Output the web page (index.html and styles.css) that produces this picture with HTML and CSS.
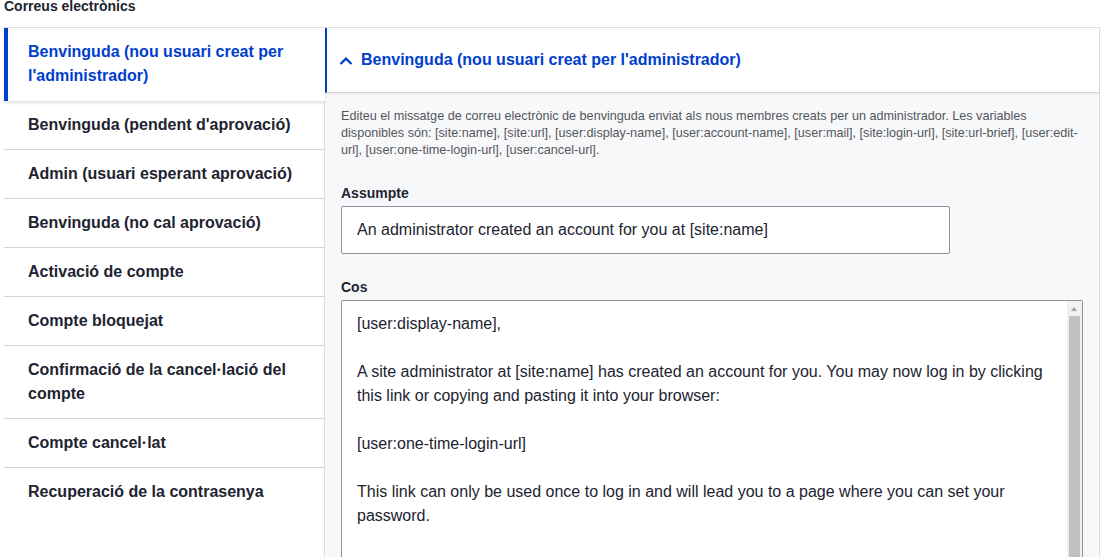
FILE: index.html
```html
<!DOCTYPE html>
<html lang="ca">
<head>
<meta charset="utf-8">
<title>Correus electrònics</title>
<link rel="stylesheet" href="styles.css">
</head>
<body>
<div class="page">
  <h2 class="title">Correus electrònics</h2>
  <div class="vtabs">
    <ul class="menu">
      <li class="tab is-active"><a>Benvinguda (nou usuari creat per l'administrador)</a></li>
      <li class="tab"><a>Benvinguda (pendent d'aprovació)</a></li>
      <li class="tab"><a>Admin (usuari esperant aprovació)</a></li>
      <li class="tab"><a>Benvinguda (no cal aprovació)</a></li>
      <li class="tab"><a>Activació de compte</a></li>
      <li class="tab"><a>Compte bloquejat</a></li>
      <li class="tab"><a>Confirmació de la cancel·lació del compte</a></li>
      <li class="tab"><a>Compte cancel·lat</a></li>
      <li class="tab"><a>Recuperació de la contrasenya</a></li>
    </ul>
    <div class="pane">
      <div class="summary">
        <svg class="chev" width="14" height="10" viewBox="0 0 14 10"><path d="M1.5 8 L7 2.6 L12.5 8" fill="none" stroke="#003ecc" stroke-width="2.2"/></svg>
        <span>Benvinguda (nou usuari creat per l'administrador)</span>
      </div>
      <div class="content">
        <p class="desc">Editeu el missatge de correu electrònic de benvinguda enviat als nous membres creats per un administrador. Les variables disponibles són: [site:name], [site:url], [user:display-name], [user:account-name], [user:mail], [site:login-url], [site:url-brief], [user:edit-url], [user:one-time-login-url], [user:cancel-url].</p>
        <div class="field">
          <label class="label">Assumpte</label>
          <input class="input" type="text" value="An administrator created an account for you at [site:name]">
        </div>
        <div class="field">
          <label class="label">Cos</label>
          <div class="ta-wrap">
            <textarea class="textarea" rows="15">[user:display-name],

A site administrator at [site:name] has created an account for you. You may now log in by clicking this link or copying and pasting it into your browser:

[user:one-time-login-url]

This link can only be used once to log in and will lead you to a page where you can set your password.

After setting your password, you will be able to log in at [site:login-url] in the future using:

username: [user:name]
password: Your password

--  [site:name] team</textarea>
            <div class="sb" aria-hidden="true">
              <div class="sb-up"></div>
              <div class="sb-thumb"></div>
            </div>
          </div>
        </div>
      </div>
    </div>
  </div>
</div>
</body>
</html>
```
FILE: styles.css
```css
html, body {
  margin: 0;
  padding: 0;
  background: #ffffff;
  font-family: "Liberation Sans", Arial, sans-serif;
  color: #222330;
  overflow: hidden;
}
.page {
  padding: 0 4px;
}
.title {
  margin: -3px 0 12px;
  font-size: 14px;
  line-height: 18px;
  font-weight: 700;
  color: #222330;
}
.vtabs {
  display: flex;
  align-items: stretch;
  border-top: 1px solid #dedfe4;
}
.menu {
  list-style: none;
  margin: 0;
  padding: 0;
  width: 320px;
  flex: 0 0 320px;
}
.tab {
  border-bottom: 1px solid #d4d4d8;
  padding: 12px 20px 12px 24px;
  font-size: 16px;
  line-height: 24px;
  font-weight: 700;
  color: #222330;
}
.tab:last-child {
  border-bottom: 0;
}
.tab.is-active {
  position: relative;
  z-index: 1;
  border-left: 4px solid #003ecc;
  padding-left: 20px;
  padding-bottom: 13px;
  border-bottom: 0;
  color: #003ecc;
  background: #fff;
  box-shadow: 0 2px 3px rgba(0, 0, 0, 0.12);
  margin-right: -1px;
}
.pane {
  flex: 1;
  background: #f7f8fa;
  border-left: 1px solid #dedfe4;
  border-right: 1px solid #dedfe4;
  min-height: 540px;
}
.summary {
  display: flex;
  align-items: center;
  gap: 8px;
  height: 64px;
  padding-left: 12px;
  background: #fff;
  border-left: 2px solid #003ecc;
  border-bottom: 1px solid #d4d4d8;
  box-shadow: 0 1px 2px rgba(0, 0, 0, 0.08);
  color: #003ecc;
  font-size: 16px;
  font-weight: 700;
  line-height: 24px;
}
.chev {
  display: block;
  margin-top: 1px;
}
.content {
  padding: 15px 16px 0 16px;
}
.desc {
  margin: 0 0 25px;
  font-size: 12.64px;
  line-height: 17px;
  color: #55565b;
}
.field {
  margin-bottom: 24px;
}
.label {
  display: block;
  font-size: 14px;
  font-weight: 700;
  line-height: 18px;
  margin-bottom: 4px;
  color: #222330;
}
.input,
.textarea {
  box-sizing: border-box;
  font-family: "Liberation Sans", Arial, sans-serif;
  font-size: 16px;
  line-height: 24px;
  color: #222330;
  background: #fff;
  border: 1px solid #8e929c;
  border-radius: 2px;
  padding: 11px 15px;
  margin: 0;
}
.input {
  display: block;
  width: 609px;
  height: 48px;
}
.ta-wrap {
  position: relative;
  width: 742px;
}
.textarea {
  display: block;
  width: 742px;
  height: 370px;
  padding-right: 30px;
  resize: none;
  overflow: hidden;
}
.sb {
  position: absolute;
  top: 1px;
  right: 1px;
  bottom: 1px;
  width: 15px;
  background: #f1f1f1;
  display: flex;
  flex-direction: column;
}
.sb-up {
  position: relative;
  height: 15px;
  flex: 0 0 15px;
}
.sb-up::after {
  content: "";
  position: absolute;
  left: 4px;
  top: 6px;
  width: 0;
  height: 0;
  border-left: 3.5px solid transparent;
  border-right: 3.5px solid transparent;
  border-bottom: 4px solid #a3a3a3;
}
.sb-thumb {
  flex: 1;
  margin: 0 2px 30px;
  background: #c1c1c1;
}
```
